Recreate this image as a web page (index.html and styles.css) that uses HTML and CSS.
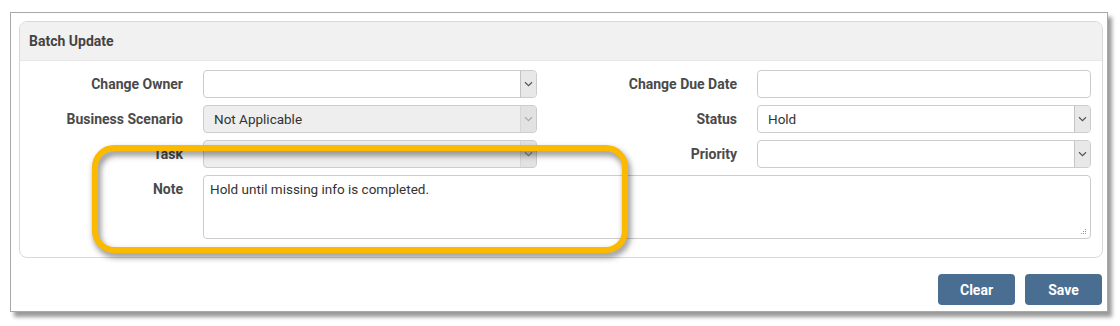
FILE: index.html
```html
<!DOCTYPE html>
<html>
<head>
<meta charset="utf-8">
<link rel="stylesheet" href="styles.css">
</head>
<body>
<div class="frame">
  <div class="panel">
    <div class="panel-head">Batch Update</div>
    <div class="form">
      <label class="lbl">Change Owner</label>
      <div class="sel"><span class="val"></span><span class="arrow"><svg width="9" height="6" viewBox="0 0 9 6"><path d="M1 1.2 L4.5 4.6 L8 1.2" fill="none" stroke="#555" stroke-width="1.2"/></svg></span></div>
      <label class="lbl">Change Due Date</label>
      <div class="inp"></div>

      <label class="lbl">Business Scenario</label>
      <div class="sel disabled"><span class="val">Not Applicable</span><span class="arrow"><svg width="9" height="6" viewBox="0 0 9 6"><path d="M1 1.2 L4.5 4.6 L8 1.2" fill="none" stroke="#aaa" stroke-width="1.2"/></svg></span></div>
      <label class="lbl">Status</label>
      <div class="sel"><span class="val">Hold</span><span class="arrow"><svg width="9" height="6" viewBox="0 0 9 6"><path d="M1 1.2 L4.5 4.6 L8 1.2" fill="none" stroke="#555" stroke-width="1.2"/></svg></span></div>

      <label class="lbl">Task</label>
      <div class="sel disabled"><span class="val"></span><span class="arrow"><svg width="9" height="6" viewBox="0 0 9 6"><path d="M1 1.2 L4.5 4.6 L8 1.2" fill="none" stroke="#888" stroke-width="1.2"/></svg></span></div>
      <label class="lbl">Priority</label>
      <div class="sel"><span class="val"></span><span class="arrow"><svg width="9" height="6" viewBox="0 0 9 6"><path d="M1 1.2 L4.5 4.6 L8 1.2" fill="none" stroke="#555" stroke-width="1.2"/></svg></span></div>

      <label class="lbl lbl-top">Note</label>
      <div class="note">Hold until missing info is completed.<svg class="grip" width="7" height="7" viewBox="0 0 7 7"><g fill="#999"><rect x="5" y="1" width="1" height="1"/><rect x="3" y="3" width="1" height="1"/><rect x="5" y="3" width="1" height="1"/><rect x="1" y="5" width="1" height="1"/><rect x="3" y="5" width="1" height="1"/><rect x="5" y="5" width="1" height="1"/></g></svg></div>
    </div>
  </div>
  <div class="actions">
    <button class="btn">Clear</button>
    <button class="btn">Save</button>
  </div>
  <div class="highlight"></div>
</div>
</body>
</html>
```

FILE: styles.css
```css
* { box-sizing: border-box; }
html, body { margin: 0; padding: 0; background: #fff; }
body {
  font-family: Roboto, "Liberation Sans", Arial, sans-serif;
  font-size: 13.5px;
  color: #333;
  width: 1120px;
  height: 326px;
  overflow: hidden;
}
.frame {
  position: relative;
  margin: 12px 0 0 10px;
  width: 1098px;
  height: 300px;
  border: 1px solid #a8a8a8;
  background: #fff;
  padding: 8px 4px 0 8px;
  box-shadow: 4px 5px 4px rgba(0,0,0,0.4);
}
.panel {
  border: 1px solid #d8d8d8;
  border-radius: 8px;
  overflow: hidden;
  height: 237px;
}
.panel-head {
  height: 39px;
  background: #f1f1f1;
  border-bottom: 1px solid #e8e8e8;
  padding-left: 9px;
  display: flex;
  align-items: center;
  font-weight: 700;
  color: #444;
  font-size: 14px;
}
.form {
  display: grid;
  grid-template-columns: 163px 334px 180px 334px;
  grid-template-rows: 28px 28px 28px 64px;
  column-gap: 20px;
  row-gap: 7px;
  padding-top: 9px;
}
.form > .note { grid-column: 2 / 5; }
.lbl {
  font-weight: 700;
  font-size: 14px;
  color: #4a4a4a;
  text-align: right;
  align-self: center;
  white-space: nowrap;
}
.lbl-top { align-self: start; padding-top: 6px; }
.sel, .inp, .note {
  border: 1px solid #ccc;
  border-radius: 4px;
  background: #fff;
}
.sel {
  display: flex;
  align-items: stretch;
  overflow: hidden;
}
.sel .val {
  flex: 1;
  padding-left: 10px;
  display: flex;
  align-items: center;
  color: #333;
}
.sel .arrow {
  width: 16px;
  background: #e8e8e8;
  border-left: 1px solid #c4c4c4;
  display: flex;
  align-items: center;
  justify-content: center;
}
.sel.disabled { background: #eeeeee; }
.sel.disabled .arrow { background: #e2e2e2; border-left-color: #d6d6d6; }
.note {
  position: relative;
  padding: 5px 6px;
  color: #333;
}
.grip { position: absolute; right: 3px; bottom: 3px; }
.actions {
  display: flex;
  justify-content: flex-end;
  gap: 10px;
  margin-top: 16px;
  padding-right: 1px;
}
.btn {
  font-family: Roboto, "Liberation Sans", Arial, sans-serif;
  font-size: 14px;
  font-weight: 700;
  color: #fff;
  background: #4a6d92;
  border: none;
  border-radius: 4px;
  height: 31px;
  width: 77px;
  padding: 0;
}
.highlight {
  position: absolute;
  left: 81px;
  top: 132px;
  width: 536px;
  height: 108px;
  border: 6px solid #fbb900;
  border-radius: 22px;
  filter: drop-shadow(2px 4px 3px rgba(0,0,0,0.5));
  pointer-events: none;
}
```
